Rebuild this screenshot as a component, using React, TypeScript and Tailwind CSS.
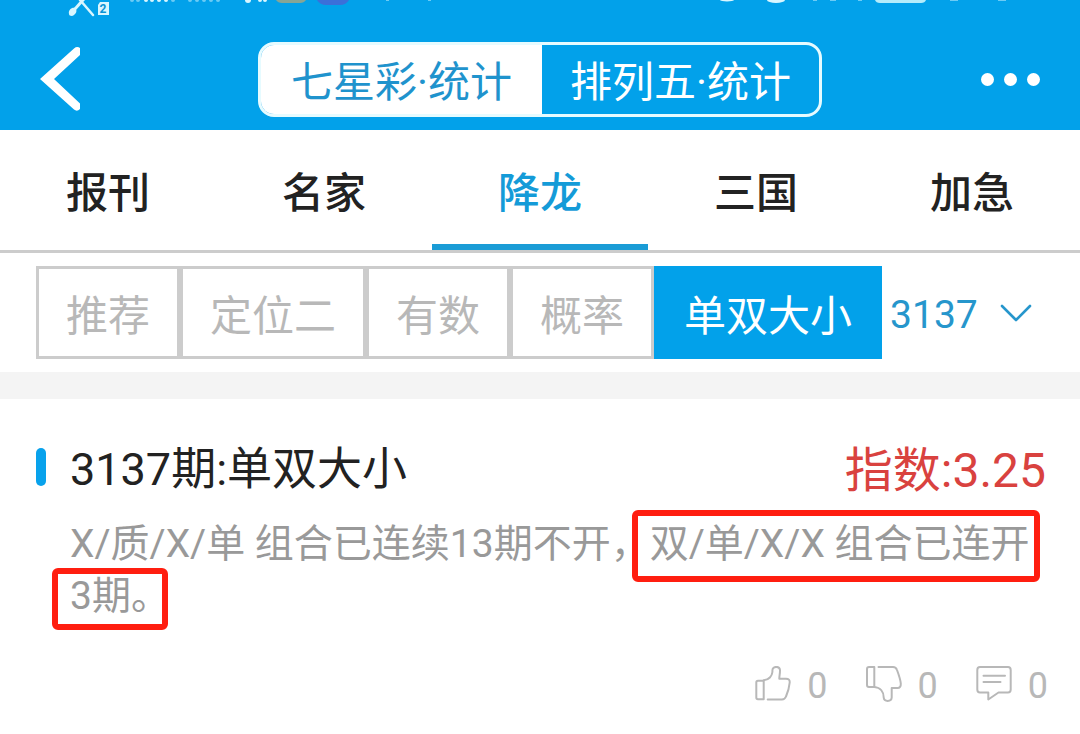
import React from "react";

const tabs = ["报刊", "名家", "降龙", "三国", "加急"];
const filters = ["推荐", "定位二", "有数", "概率", "单双大小"];

function StatusBar() {
  return (
    <svg viewBox="0 0 1080 28" className="block h-7 w-full" aria-hidden="true">
      <g fill="#d9f6ff">
        <path d="M69 14C68 10 72 7 75 8C78 10 76 15 72 16C70 16 69 15 69 14Z" />
        <path d="M73 9L81 0H85L76 10Z" />
        <path d="M80 0L93 15" stroke="#d9f6ff" strokeWidth="2.5" strokeLinecap="round" />
        <path d="M100 2H109V15H98V5Z" />
        <circle cx="146" cy="0" r="2" />
        <circle cx="152" cy="0" r="2" />
        <circle cx="159" cy="0" r="2" />
        <circle cx="166" cy="0" r="2" />
        <circle cx="248" cy="0" r="3" />
        <circle cx="260" cy="0" r="2" />
        <circle cx="265" cy="0" r="2" />
        <ellipse cx="727" cy="0" rx="7" ry="1.5" />
        <ellipse cx="776" cy="0" rx="9" ry="3" />
      </g>
      <g fill="#6ccbf5">
        <circle cx="132" cy="0" r="2" />
        <circle cx="138" cy="0" r="2" />
        <circle cx="173" cy="0" r="2" />
        <circle cx="190" cy="0" r="2" />
        <circle cx="197" cy="0" r="2" />
        <circle cx="204" cy="0" r="2" />
        <circle cx="211" cy="0" r="2" />
        <circle cx="218" cy="0" r="2" />
        <rect x="386" y="0" width="3" height="1" />
        <rect x="428" y="0" width="3" height="1" />
        <rect x="813" y="0" width="4" height="1" />
        <rect x="830" y="0" width="6" height="1" />
        <rect x="858" y="0" width="4" height="1" />
        <rect x="950" y="0" width="8" height="1" />
        <rect x="998" y="0" width="8" height="1" />
      </g>
      <text x="103" y="13" textAnchor="middle" fontSize="12" fontWeight="700" fill="#0b93d4" fontFamily="Roboto, sans-serif">2</text>
      <path d="M276 0H306Q304 3 300 3H282Q278 3 276 0Z" fill="#86a596" />
      <path d="M317 0H349Q346 5 340 5H326Q320 5 317 0Z" fill="#3b6fd9" />
      <path d="M875 0H926Q925 3 921 3H880Q876 3 875 0Z" fill="#b5ecfb" />
    </svg>
  );
}

function ThumbUp() {
  return (
    <svg viewBox="0 0 36 36" className="size-9" fill="none" stroke="currentColor" strokeWidth="2" strokeLinecap="round" strokeLinejoin="round" aria-hidden="true">
      <path d="M3 14.7H8.7V33.3H3Q1.3 33.3 1.3 31.5V16.5Q1.3 14.7 3 14.7Z" />
      <path d="M8.7 14.2C14 14 17 10 17.4 6V4.500C17.400 -.3 25 -.3 25 4.500C25 8 24.300 9.500 24.300 12.700H31Q35 12.700 34.700 16.500C34.200 22 32.500 27 31 30.500Q29.800 33.500 27 33.500H12.700" />
    </svg>
  );
}

function ThumbDown() {
  return (
    <svg viewBox="0 0 36 36" className="size-9" fill="none" stroke="currentColor" strokeWidth="2" strokeLinecap="round" strokeLinejoin="round" aria-hidden="true">
      <path d="M3 1H8.3V21H3Q1 21 1 19V3Q1 1 3 1Z" />
      <path d="M12.5 1H27Q30 1 31 4C32.7 8.5 34.3 13 34.8 17.5Q35 22 31.5 22H25.7V31.5C25.5 36 18 36 17.7 31.5C17.7 26 14.5 21.5 8.3 21" />
    </svg>
  );
}

function Comment() {
  return (
    <svg viewBox="0 0 36 36" className="size-9" fill="none" stroke="currentColor" strokeWidth="2" strokeLinecap="round" strokeLinejoin="round" aria-hidden="true">
      <path d="M4 1H32Q34.7 1 34.7 4V23.5Q34.7 26.5 32 26.5H22.5L12.3 33.5V26.5H4Q1.3 26.5 1.3 23.5V4Q1.3 1 4 1Z" />
      <path d="M7.5 9.7H29M7.5 15.9H24.5" />
    </svg>
  );
}

function Action({ label, children }: { label: string; children: React.ReactNode }) {
  return (
    <button aria-label={label} className="flex items-center gap-4">
      {children}
      <span className="pt-1 text-4xl">0</span>
    </button>
  );
}

function Marked({ frame, children }: { frame: string; children: React.ReactNode }) {
  return (
    <span className="relative inline-block whitespace-nowrap">
      {children}
      <span className={`pointer-events-none absolute rounded-md border-6 border-[#ff1e10] ${frame}`} />
    </span>
  );
}

export default function App() {
  return (
    <div className="min-h-screen bg-white font-['Roboto','Noto_Sans_CJK_SC',sans-serif] text-[#222]">
      <header className="bg-[#02a1ea]">
        <StatusBar />
        <div className="grid h-[102px] grid-cols-[1fr_auto_1fr] items-center px-10">
          <button aria-label="返回" className="justify-self-start">
            <svg viewBox="0 0 40 64" className="h-16 w-10" fill="#fff" aria-hidden="true">
              <path d="M0 32L34 1.5Q37-1 40 1V8L14 32L40 56.5V62Q37 65 34 62.5Z" />
            </svg>
          </button>
          <div className="flex h-[75px] overflow-hidden rounded-2xl border-3 border-[#e6fbff] text-[42px] leading-none text-white">
            <button className="bg-white px-[30px] pt-2 text-[#1f93cd]">七星彩·统计</button>
            <button className="px-7 pt-2">排列五·统计</button>
          </div>
          <button aria-label="更多" className="flex gap-[10px] justify-self-end">
            <span className="size-[13px] rounded-full bg-white" />
            <span className="size-[13px] rounded-full bg-white" />
            <span className="size-[13px] rounded-full bg-white" />
          </button>
        </div>
      </header>

      <nav className="flex h-[123px] border-b-3 border-[#ccc]">
        {tabs.map((tab) => (
          <button
            key={tab}
            className={
              tab === "降龙"
                ? "flex-1 border-y-6 border-t-transparent border-b-[#1a9cd6] pt-1.5 text-[42px] font-medium text-[#149bd8]"
                : "flex-1 border-y-6 border-transparent pt-1.5 text-[42px] font-medium"
            }
          >
            {tab}
          </button>
        ))}
      </nav>

      <div className="flex items-center px-9 py-[13px]">
        {filters.map((name) => (
          <button
            key={name}
            className={
              name === "单双大小"
                ? "h-[93px] shrink-0 border-3 border-[#02a1ea] bg-[#02a1ea] px-[27px] pt-2 text-[42px] text-white"
                : "h-[93px] shrink-0 border-3 border-[#ccc] px-[27px] pt-2 text-[42px] text-[#b8b8b8]"
            }
          >
            {name}
          </button>
        ))}
        <label className="relative ml-2 flex flex-1 items-center text-[#2696cc]">
          <select aria-label="期号" className="w-full appearance-none bg-transparent pt-1.5 text-[39px] outline-none">
            <option>3137</option>
          </select>
          <svg viewBox="0 0 32 18" className="pointer-events-none absolute right-3 h-[18px] w-8" fill="none" stroke="currentColor" strokeWidth="2.6" strokeLinecap="round" strokeLinejoin="round" aria-hidden="true">
            <path d="M2 2L16 16L30 2" />
          </svg>
        </label>
      </div>

      <div className="h-[27px] bg-[#f4f4f4]" />

      <article className="px-9 pt-8">
        <div className="flex h-[72px] items-center">
          <span className="mr-6 h-[38px] w-[10px] rounded-full bg-[#08a2ec]" />
          <h2 className="pt-1.5 text-[45px]">3137期:单双大小</h2>
          <strong className="-mr-0.5 ml-auto pt-2 text-[48px] font-normal text-[#d9423f]">指数:3.25</strong>
        </div>
        <p className="mt-[15px] pl-[34px] text-[39px] leading-[52px] text-[#999]">
          X/质/X/单 组合已连续13期不开，<Marked frame="-top-2 -right-2.5 -bottom-3 -left-4.5">双/单/X/X 组合已连开</Marked>
          <Marked frame="-top-0.5 right-0.5 -bottom-2 -left-4.5">3期。</Marked>
        </p>
        <div className="mt-10 -mr-1 flex justify-end gap-[38px] text-[#b8b8b8]">
          <Action label="赞"><ThumbUp /></Action>
          <Action label="踩"><ThumbDown /></Action>
          <Action label="评论"><Comment /></Action>
        </div>
      </article>
    </div>
  );
}
